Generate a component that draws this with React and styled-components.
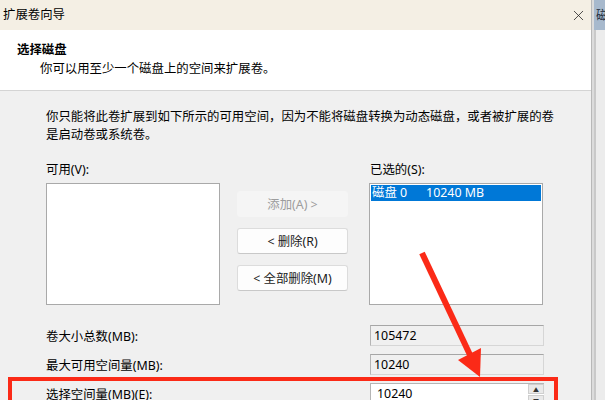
import React from "react";
import styled, { createGlobalStyle } from "styled-components";
import { X } from "lucide-react";

const GlobalStyle = createGlobalStyle`
  html, body {
    margin: 0;
    padding: 0;
    background: #f0f0f0;
  }
  * {
    box-sizing: border-box;
  }
`;

const Screen = styled.div`
  position: relative;
  width: 605px;
  height: 400px;
  overflow: hidden;
  display: flex;
  font-family: "Noto Sans", "Noto Sans CJK SC", sans-serif;
  font-size: 12.4px;
  color: #000;
`;

const Window = styled.div`
  width: 594px;
  height: 100%;
  display: flex;
  flex-direction: column;
  border-right: 1px solid #b8b8b8;
  box-shadow: 1px 0 2px rgba(0, 0, 0, 0.15);
`;

const TitleBar = styled.div`
  height: 30px;
  flex: none;
  display: flex;
  align-items: center;
  justify-content: space-between;
  padding: 0 1px 0 3px;
  background: #f4efe4;
`;

const TitleText = styled.span`
  line-height: 16px;
`;

const CloseButton = styled.div`
  width: 24px;
  height: 24px;
  display: flex;
  align-items: center;
  justify-content: center;
  color: #222;
`;

const Header = styled.div`
  height: 61px;
  flex: none;
  background: #fff;
  padding: 11px 0 0 17px;
  border-bottom: 1px solid #d4d4d4;
`;

const Heading = styled.div`
  font-weight: 700;
  line-height: 18px;
`;

const SubHeading = styled.div`
  margin: 1px 0 0 23px;
  line-height: 18px;
`;

const Body = styled.div`
  flex: 1;
  background: #f0f0f0;
  padding: 17px 30px 0 46px;
`;

const Paragraph = styled.p`
  margin: 0;
  line-height: 18px;
  width: 515px;
`;

const Transfer = styled.div`
  display: grid;
  grid-template-columns: 191px 132px 174px;
  grid-template-rows: 18px 122px;
  row-gap: 4px;
  margin-top: 17px;
`;

const FieldLabel = styled.div`
  line-height: 18px;
  margin-left: ${({ $shift }) => $shift || 0}px;
`;

const ListBox = styled.div`
  width: 174px;
  height: 122px;
  background: #fff;
  border: 1px solid #a9a9a9;
  padding: 1px;
`;

const ListItem = styled.div`
  height: 16px;
  display: flex;
  align-items: center;
  gap: 19px;
  padding-left: 1px;
  line-height: 16px;
  background: ${({ $selected }) => ($selected ? "#0078d7" : "transparent")};
  color: ${({ $selected }) => ($selected ? "#fff" : "#000")};
`;

const ButtonStack = styled.div`
  display: flex;
  flex-direction: column;
  gap: 11px;
  padding-top: 8px;
`;

const Button = styled.div`
  width: 111px;
  height: 26px;
  display: flex;
  align-items: center;
  justify-content: center;
  border-radius: 3px;
  background: ${({ $disabled }) => ($disabled ? "#f5f5f5" : "#fdfdfd")};
  border: 1px solid ${({ $disabled }) => ($disabled ? "#f5f5f5" : "#dcdcdc")};
  border-bottom-color: ${({ $disabled }) => ($disabled ? "#f5f5f5" : "#c8c8c8")};
  color: ${({ $disabled }) => ($disabled ? "#9d9d9d" : "#1a1a1a")};
`;

const InfoRow = styled.div`
  display: grid;
  grid-template-columns: 324px 174px;
  align-items: center;
  margin-top: ${({ $top }) => $top}px;
`;

const ReadField = styled.div`
  height: 21px;
  display: flex;
  align-items: center;
  padding-left: 3px;
  background: #f0f0f0;
  border: 1px solid #d6d6d6;
  border-top-color: #a6a6a6;
  border-left-color: #b5b5b5;
`;

const Highlight = styled.div`
  width: 550px;
  margin: 2px 0 0 -38px;
  border: 4px solid #fb2a17;
  border-bottom: none;
  padding: 2px 0 20px 34px;
`;

const SpinInput = styled.div`
  height: 22px;
  display: flex;
  background: #fff;
  border: 1px solid #b5b5b5;
  border-right: none;
`;

const SpinValue = styled.div`
  flex: 1;
  padding-left: 6px;
  line-height: 20px;
`;

const SpinButtons = styled.div`
  width: 16px;
  display: flex;
  flex-direction: column;
  gap: 1px;
`;

const SpinArrow = styled.div`
  height: 10px;
  display: flex;
  align-items: center;
  justify-content: center;
  background: #e9e9e9;
  border: 1px solid #cfcfcf;
  font-size: 6px;
  color: #333;
`;

const SideWindow = styled.div`
  flex: 1;
  display: flex;
  flex-direction: column;
  padding-left: 2px;
  background: #dcdcdc;
`;

const SideTitle = styled.div`
  height: 30px;
  background: #a7b9cd;
  padding: 6px 0 0 2px;
  color: #1d2c3c;
  overflow: hidden;
  white-space: nowrap;
`;

const SideBody = styled.div`
  flex: 1;
  background: #ececec;
  border-left: 2px solid #c9c9c9;
`;

const Annotation = styled.svg`
  position: absolute;
  left: 0;
  top: 0;
  pointer-events: none;
`;

export default function App() {
  return (
    <>
      <GlobalStyle />
      <Screen>
        <Window>
          <TitleBar>
            <TitleText>扩展卷向导</TitleText>
            <CloseButton>
              <X size={17} strokeWidth={1.1} />
            </CloseButton>
          </TitleBar>
          <Header>
            <Heading>选择磁盘</Heading>
            <SubHeading>你可以用至少一个磁盘上的空间来扩展卷。</SubHeading>
          </Header>
          <Body>
            <Paragraph>
              你只能将此卷扩展到如下所示的可用空间，因为不能将磁盘转换为动态磁盘，或者被扩展的卷是启动卷或系统卷。
            </Paragraph>
            <Transfer>
              <FieldLabel>可用(V):</FieldLabel>
              <div />
              <FieldLabel $shift={1}>已选的(S):</FieldLabel>
              <ListBox />
              <ButtonStack>
                <Button $disabled>添加(A) &gt;</Button>
                <Button>&lt; 删除(R)</Button>
                <Button>&lt; 全部删除(M)</Button>
              </ButtonStack>
              <ListBox>
                <ListItem $selected>
                  <span>磁盘 0</span>
                  <span>10240 MB</span>
                </ListItem>
              </ListBox>
            </Transfer>
            <InfoRow $top={20}>
              <span>卷大小总数(MB):</span>
              <ReadField>105472</ReadField>
            </InfoRow>
            <InfoRow $top={8}>
              <span>最大可用空间量(MB):</span>
              <ReadField>10240</ReadField>
            </InfoRow>
            <Highlight>
              <InfoRow $top={0}>
                <span>选择空间量(MB)(E):</span>
                <SpinInput>
                  <SpinValue>10240</SpinValue>
                  <SpinButtons>
                    <SpinArrow>▲</SpinArrow>
                    <SpinArrow>▼</SpinArrow>
                  </SpinButtons>
                </SpinInput>
              </InfoRow>
            </Highlight>
          </Body>
        </Window>
        <SideWindow>
          <SideTitle>磁</SideTitle>
          <SideBody />
        </SideWindow>
        <Annotation width="605" height="400" viewBox="0 0 605 400">
          <line x1="422" y1="253" x2="471" y2="357" stroke="#fb2a17" strokeWidth="6" />
          <polygon points="480,377 458,360 481,348" fill="#fb2a17" />
        </Annotation>
      </Screen>
    </>
  );
}
